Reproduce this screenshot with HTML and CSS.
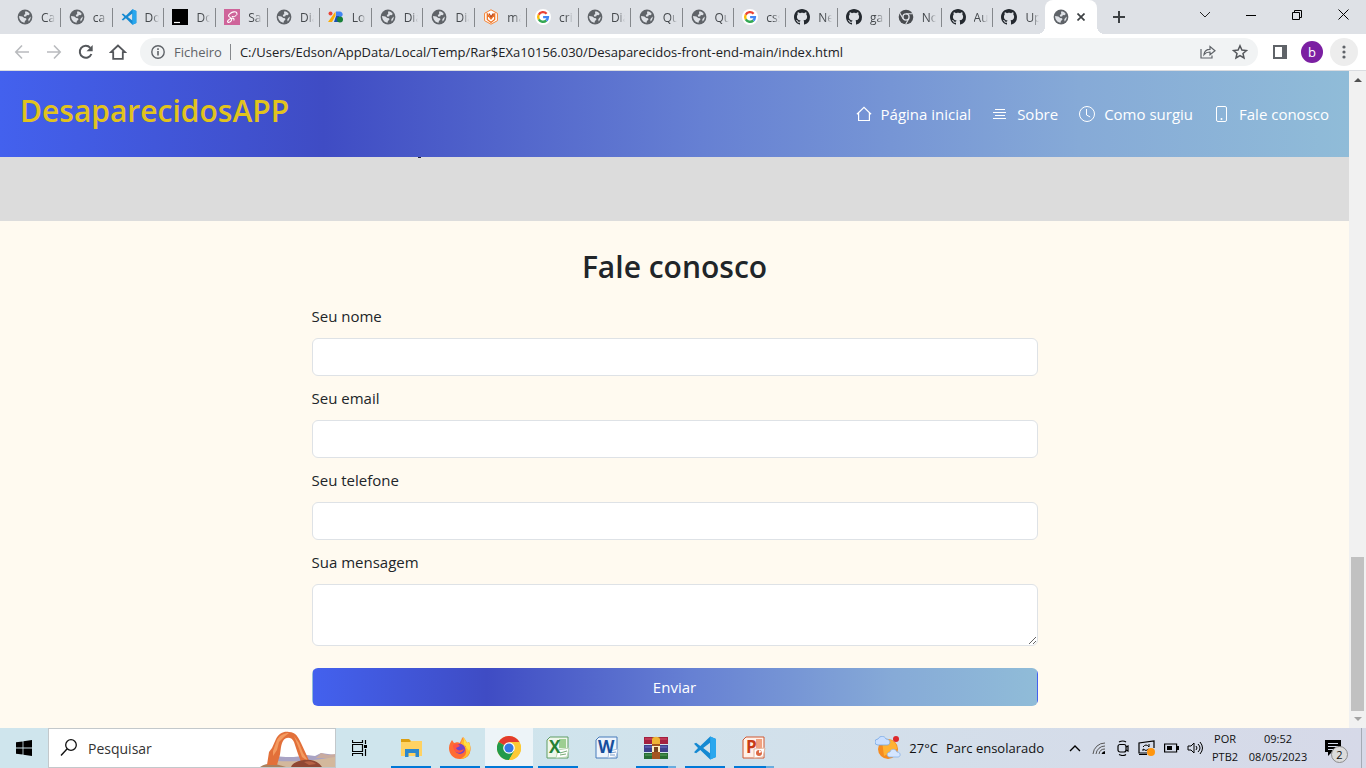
FILE: index.html
```html
<!DOCTYPE html>
<html lang="pt">
<head>
<meta charset="utf-8">
<title>DesaparecidosAPP</title>
<link rel="stylesheet" href="styles.css">
</head>
<body>
<svg class="sprite" aria-hidden="true">
  <symbol id="globe" viewBox="0 0 16 16"><circle cx="8" cy="8" r="7.4" fill="#5f6368"/><path d="M8.400 2.200c1.800.1 3.600 1.200 4.400 2.900l-1.300 1.200-1.600-.2-.8 1.300-2 .1-.3-1.600 1.500-.8-.3-1.300z" fill="#dee1e6"/><path d="M2.100 7.100l3.300.3 1.800 1.700 1.900.2.300 1.500-1.500 1.100-.3 1.900c-3.200-.2-5.600-3.200-5.500-6.700z" fill="#dee1e6"/><path d="M13.700 7.500c.2 2-.7 3.900-2.100 5l-.3-2.200 1-1.200z" fill="#dee1e6"/></symbol>
  <symbol id="vscode" viewBox="0 0 24 24"><path d="M17.200.4 23 3.100v17.800l-5.800 2.700L7.300 14l-4.200 3.300L1 16.200l4-4.200-4-4.200 2.100-1.100L7.300 10zM17 6.800 10.200 12l6.800 5.200z" fill="#1489d2" fill-rule="evenodd"/><path d="M17.200.4 23 3.100v17.800l-5.800 2.700z" fill="#2aa7ee"/></symbol>
  <symbol id="google" viewBox="0 0 16 16"><circle cx="8" cy="8" r="8" fill="#fff"/><g fill="none" stroke-width="2.400"><path d="M3.700 5.700A4.900 4.900 0 0 1 11.600 4.700" stroke="#ea4335"/><path d="M3.800 10.400a5 5 0 0 1-.1-4.700" stroke="#fbbc05"/><path d="M11.300 11.500a4.900 4.900 0 0 1-7.500-1.100" stroke="#34a853"/><path d="M8.100 8.100h4.800a4.800 4.800 0 0 1-1.600 3.400" stroke="#4285f4"/></g></symbol>
  <symbol id="github" viewBox="0 0 16 16"><path fill="#24292f" d="M8 0C3.58 0 0 3.58 0 8c0 3.54 2.29 6.53 5.47 7.59.4.07.55-.17.55-.38 0-.19-.01-.82-.01-1.49-2.01.37-2.53-.49-2.69-.94-.09-.23-.48-.94-.82-1.13-.28-.15-.68-.52-.01-.53.63-.01 1.08.58 1.23.82.72 1.21 1.87.87 2.33.66.07-.52.28-.87.51-1.07-1.78-.2-3.64-.89-3.64-3.95 0-.87.31-1.59.82-2.15-.08-.2-.36-1.02.08-2.12 0 0 .67-.21 2.2.82.64-.18 1.32-.27 2-.27s1.36.09 2 .27c1.53-1.04 2.2-.82 2.2-.82.44 1.1.16 1.92.08 2.12.51.56.82 1.27.82 2.15 0 3.07-1.87 3.75-3.65 3.95.29.25.54.73.54 1.48 0 1.07-.01 1.93-.01 2.2 0 .21.15.46.55.38A8.01 8.01 0 0 0 16 8c0-4.42-3.58-8-8-8"/></symbol>
</svg>

<div class="window">
  <div class="tabstrip">
    <div class="tabs">
      <a class="tab" href="#"><svg class="fav"><use href="#globe"/></svg><span>Ca</span></a>
      <a class="tab" href="#"><svg class="fav"><use href="#globe"/></svg><span>ca</span></a>
      <a class="tab" href="#"><svg class="fav"><use href="#vscode"/></svg><span>Do</span></a>
      <a class="tab" href="#"><svg class="fav" viewBox="0 0 16 16"><path d="M0 0h16v16H0z"/><path d="M2 13.500h6" stroke="#fff" stroke-width="1.200"/></svg><span>Do</span></a>
      <a class="tab" href="#"><svg class="fav" viewBox="0 0 16 16"><path d="M0 0h16v16H0z" fill="#cf649a"/><path d="M12.800 5.600c.7-2.400-1-3.100-3-2.700-2.500.5-5.400 2.300-5.300 3.800.2 1.500 3.400 2 3.200 3.800-.1 1.600-2.600 3.300-3.800 2.700-1.300-.9 1.200-3.500 3.800-4 2.200-.5 2.800.8 2 2.200" fill="none" stroke="#fff" stroke-width="1.100"/><path d="M12.800 5.600c-.7 1.600-3.300 2.600-5 1.800" fill="none" stroke="#fff"/></svg><span>Sa</span></a>
      <a class="tab" href="#"><svg class="fav"><use href="#globe"/></svg><span>Dia</span></a>
      <a class="tab" href="#"><svg class="fav" viewBox="0 0 16 16"><circle cx="2.500" cy="4.500" r="2" fill="#ea4335"/><path d="M7.500 2.500v4L4 13H0z" fill="#fbad05"/><path d="M8 2.500h3.500a3 3 0 0 1 3 4L13 8H8z" fill="#4285f4"/><path d="M8 7h3v6H6z" fill="#1a50b0"/><circle cx="12" cy="10.500" r="3" fill="#188038"/></svg><span>Lo</span></a>
      <a class="tab" href="#"><svg class="fav"><use href="#globe"/></svg><span>Dia</span></a>
      <a class="tab" href="#"><svg class="fav"><use href="#globe"/></svg><span>Dia</span></a>
      <a class="tab" href="#"><svg class="fav" viewBox="0 0 16 16"><path d="M8 .8l6.400 3.500v7.400L8 15.200l-6.400-3.500V4.300z" fill="#fff" stroke="#f58233"/><path d="M4.300 5v5.500l3.700 3 3.700-3V5L8 10z" fill="none" stroke="#ee7425" stroke-width="1.300"/><path d="M6 4.500l2 3.500 2.500-3.500" fill="none" stroke="#bd481c" stroke-width="1.300"/></svg><span>ma</span></a>
      <a class="tab" href="#"><svg class="fav"><use href="#google"/></svg><span>cri</span></a>
      <a class="tab" href="#"><svg class="fav"><use href="#globe"/></svg><span>Dia</span></a>
      <a class="tab" href="#"><svg class="fav"><use href="#globe"/></svg><span>Qu</span></a>
      <a class="tab" href="#"><svg class="fav"><use href="#globe"/></svg><span>Qu</span></a>
      <a class="tab" href="#"><svg class="fav"><use href="#google"/></svg><span>css</span></a>
      <a class="tab" href="#"><svg class="fav"><use href="#github"/></svg><span>Ne</span></a>
      <a class="tab" href="#"><svg class="fav"><use href="#github"/></svg><span>ga</span></a>
      <a class="tab" href="#"><svg class="fav" viewBox="0 0 16 16"><circle cx="8" cy="8" r="7.300" fill="#494c50"/><circle cx="8" cy="8" r="3.100" fill="#494c50" stroke="#dee1e6" stroke-width="1.300"/><path d="M8 4.700h6.800M5.100 9.700 1.800 4M10.800 9.800 7.700 15.200" stroke="#dee1e6" stroke-width="1.100"/></svg><span>No</span></a>
      <a class="tab" href="#"><svg class="fav"><use href="#github"/></svg><span>Au</span></a>
      <a class="tab" href="#"><svg class="fav"><use href="#github"/></svg><span>Up</span></a>
      <div class="tab tab-active"><svg class="fav"><use href="#globe"/></svg><button class="tab-close" aria-label="Fechar"><svg width="8" height="8" viewBox="0 0 8 8"><path d="M.5.5l7 7m0-7l-7 7" stroke="#3c4043" stroke-width="1.700"/></svg></button></div>
    </div>
    <button class="new-tab" aria-label="Novo separador"><svg width="12" height="12"><path d="M6 0v12M0 6h12" stroke="#3c4043" stroke-width="2"/></svg></button>
    <div class="win-controls">
      <button aria-label="Procurar separadores"><svg width="12" height="8"><path d="M1 1l5 5 5-5" fill="none" stroke="#222"/></svg></button>
      <button aria-label="Minimizar"><svg width="10" height="10"><path d="M0 5.500h10" stroke="#000"/></svg></button>
      <button aria-label="Restaurar"><svg width="10" height="10"><path d="M.5 2.500h7v7h-7zM2.500 2.500v-2h7v7h-2" fill="none" stroke="#000"/></svg></button>
      <button aria-label="Fechar"><svg width="11" height="11"><path d="M.5.5l10 10m0-10l-10 10" stroke="#000"/></svg></button>
    </div>
  </div>

  <div class="toolbar">
    <button class="tool" aria-label="Voltar"><svg width="16" height="16" viewBox="0 0 16 16"><path d="M15 8H2m6-6.500L1.800 8 8 14.500" fill="none" stroke="#b9bbbe" stroke-width="1.600"/></svg></button>
    <button class="tool" aria-label="Avançar"><svg width="16" height="16" viewBox="0 0 16 16"><path d="M1 8h13M8 1.500L14.200 8 8 14.500" fill="none" stroke="#b9bbbe" stroke-width="1.600"/></svg></button>
    <button class="tool" aria-label="Recarregar"><svg width="16" height="16" viewBox="0 0 16 16"><path d="M13.400 10A6 6 0 1 1 12.300 3.800" fill="none" stroke="#54575b" stroke-width="2"/><path d="M14.700 1v6.200H8.500z" fill="#54575b"/></svg></button>
    <button class="tool" aria-label="Página principal"><svg width="18" height="16" viewBox="0 0 18 16"><path d="M9 1.500 2 8.200h2.200v6.600h9.600V8.200H16z" fill="none" stroke="#54575b" stroke-width="1.800"/></svg></button>
    <div class="omnibox">
      <svg width="14" height="14" viewBox="0 0 14 14"><circle cx="7" cy="7" r="6.200" fill="none" stroke="#5f6368" stroke-width="1.400"/><path d="M7 6v4.500M7 3.300V5" stroke="#5f6368" stroke-width="1.600"/></svg>
      <span class="scheme">Ficheiro</span>
      <input class="url" type="text" aria-label="Endereço" value="C:/Users/Edson/AppData/Local/Temp/Rar$EXa10156.030/Desaparecidos-front-end-main/index.html">
      <button class="tool" aria-label="Partilhar"><svg width="16" height="16" viewBox="0 0 16 16"><path d="M1 5v9h11v-2.500M4 10.500c.4-3.600 2.500-5.200 6-5.200V2.500l5 4.200-5 4V8C7.500 8 5.500 8.700 4 10.500z" fill="none" stroke="#5f6368" stroke-width="1.200"/></svg></button>
      <button class="tool" aria-label="Favoritos"><svg width="16" height="16" viewBox="0 0 16 16"><path d="M8 1.800l1.900 4.300 4.600.4L11 9.500l1 4.500-4-2.400L4 14l1-4.500-3.500-3 4.600-.4z" fill="none" stroke="#54575b" stroke-width="1.500"/></svg></button>
    </div>
    <button class="tool" aria-label="Painel lateral"><svg width="14" height="14"><path d="M1 1h12v12H1z" fill="none" stroke="#5f6368" stroke-width="2"/><path d="M9 1h4v12H9z" fill="#5f6368"/></svg></button>
    <button class="avatar">b</button>
    <button class="tool tool-menu" aria-label="Menu"><svg width="4" height="14"><g fill="#5f6368"><circle cx="2" cy="2" r="1.600"/><circle cx="2" cy="7" r="1.600"/><circle cx="2" cy="12" r="1.600"/></g></svg></button>
  </div>

  <div class="viewport">
    <div class="page">
      <header class="site-header">
        <h1 class="brand">DesaparecidosAPP</h1>
        <nav class="site-nav">
          <a href="#"><svg class="nav-icon" viewBox="0 0 16 16"><path d="M.9 8.300 8 1.300l7.100 7M2.600 7v7.500h10.800V7" fill="none" stroke="#fff" stroke-width="1.200"/></svg>Página inicial</a>
          <a href="#"><svg class="nav-icon" viewBox="0 0 16 16"><path d="M3 3.500h10M1 6.500h13M3 9.500h10M1 12.500h13" stroke="#fff"/></svg>Sobre</a>
          <a href="#"><svg class="nav-icon" viewBox="0 0 16 16"><circle cx="8" cy="8" r="7.500" fill="none" stroke="#fff"/><path d="M7.500 3v6l3.700 2" fill="none" stroke="#fff"/></svg>Como surgiu</a>
          <a href="#"><svg class="nav-icon" viewBox="0 0 16 16"><rect x="2.500" y=".5" width="10" height="15" rx="1.500" fill="none" stroke="#fff"/><circle cx="7.500" cy="13" r="1" fill="#fff"/></svg>Fale conosco</a>
        </nav>
      </header>
      <section class="band"></section>
      <main class="contact">
        <h2>Fale conosco</h2>
        <form class="contact-form">
          <label for="nome">Seu nome</label>
          <input id="nome" type="text">
          <label for="email">Seu email</label>
          <input id="email" type="email">
          <label for="telefone">Seu telefone</label>
          <input id="telefone" type="tel">
          <label for="mensagem">Sua mensagem</label>
          <textarea id="mensagem" rows="2"></textarea>
          <button type="button">Enviar</button>
        </form>
      </main>
    </div>
    <div class="scrollbar" aria-hidden="true">
      <svg width="17" height="17"><path d="M5 11l4-4 4 4z" fill="#505050"/></svg>
      <div class="thumb"></div>
      <svg width="17" height="17"><path d="M5 6l4 4 4-4z" fill="#a3a3a3"/></svg>
    </div>
  </div>

  <div class="taskbar">
    <button class="task" aria-label="Iniciar"><svg width="16" height="16"><path d="M0 2.300 6.600 1.400v6.100H0zM7.400 1.300 16 0v7.500H7.400zM0 8.500h6.600v6.100L0 13.700zM7.400 8.500H16V16l-8.600-1.300z"/></svg></button>
    <div class="search">
      <svg width="18" height="18" viewBox="0 0 18 18"><circle cx="11" cy="6" r="5.300" fill="none" stroke="#111" stroke-width="1.300"/><path d="M7.200 9.800 1 16.500" stroke="#111" stroke-width="1.400"/></svg>
      <input type="text" aria-label="Pesquisar" placeholder="Pesquisar">
      <svg width="75" height="38" viewBox="0 0 75 38"><path d="M16 27c12 2 22 1 31-1l8 1 6-3 14 2v12H16z" fill="#a9a3c4"/><path d="M58 27l3-3 7 2 7-1v4H56z" fill="#c9ab9f"/><path d="M16 32c20 1 34 0 59-4v10H16z" fill="#d3b89c"/><path d="M0 38c4-3 8-3 12-4l14 4z" fill="#a9815e"/><path d="M7 36l2-13 3-4 4-9c3-6 8-8 13-7 7 0 9 5 12 11l6 13 4 9-8 2-5-13-4-12c-2-5-8-6-11-1-3 5-2 13-4 17l-2 7z" fill="#e2703a"/><path d="M13 22l4-11c3-5 7-7 12-7l-5 4-5 5-2 8-4 6zM34 7l5 7 4 10 6 9-7-5-4-11z" fill="#f49b60"/><path d="M31 38c2-5 8-6 13-7 7-1 14 1 18 7z" fill="#8f4734"/><path d="M44 33c6-2 10 0 12 2l-7 1z" fill="#b76245"/></svg>
    </div>
    <button class="task" aria-label="Vista de tarefas"><svg width="16" height="16"><path d="M.5 4.500h10v7H.5zM.5 0v2.500h10V0M.5 16v-2.500h10V16M13.500 0v4M13.500 9v7" fill="none" stroke="#000" stroke-width="1.200"/><path d="M12 5h3v3h-3z"/></svg></button>
    <div class="apps">
      <button class="task open" aria-label="Explorador"><svg width="24" height="24" viewBox="0 0 24 24"><path d="M2 3h8l2 2v4H2z" fill="#dc9e10"/><path d="M2 6h9l1-1h11v15H2z" fill="#ffd262"/><path d="M6 21v-8h14v8h-3.500v-4h-7v4z" fill="#2d88cc"/></svg></button>
      <button class="task open" aria-label="Firefox"><svg width="24" height="24" viewBox="0 0 24 24"><path d="M1 12c0-4 2-6 3-8l2 3c3-1 4-1 6 0 1-3 2-4 3-6 2 2 3 4 4 6l2-1c3 7 2 17-9 17C5 23 1 18 1 12z" fill="#ff6c32"/><path d="M14 1c0 4 4 6 3 10l5-2c2 8-3 14-10 14 10-4 6-13 1-15z" fill="#ffbd2c"/><path d="M15 1c2 2 3 4 4 6l2-1c2 4 1 8 0 9L16 8z" fill="#ffdf42"/><circle cx="12" cy="13" r="5" fill="#7244ca"/><path d="M5 9c3-2 6-1 7 1l-4 2c1 3 5 3 8 1-2 6-11 5-11-4z" fill="#ff5443"/></svg></button>
      <button class="task open current" aria-label="Chrome"><svg width="24" height="24" viewBox="0 0 24 24"><circle cx="12" cy="12" r="12" fill="#fcc934"/><path d="M12 12 1.600 6A12 12 0 0 1 22.400 6z" fill="#e33b2e"/><path d="M1.600 6A12 12 0 0 0 12 24l5.200-9L12 12z" fill="#229a4b"/><path d="M12 6h10.400A12 12 0 0 1 12 24l5.200-9z" fill="#fcc934"/><circle cx="12" cy="12" r="5.800" fill="#fff"/><circle cx="12" cy="12" r="4.600" fill="#3478e5"/></svg></button>
      <button class="task open" aria-label="Excel"><svg width="24" height="24" viewBox="0 0 24 24"><path d="M4 1h18v21H1V4z" fill="#eef7eb" stroke="#5f9d64"/><path d="M13 3h7v9h-7z" fill="#9dce91"/><path d="M12 14l11-2-2 9-11 1z" fill="#fff" stroke="#b8d6b3"/><path d="M14 17l7-2m-7 4 6-1" stroke="#79ad76"/><text x="3" y="17" class="office-letter" fill="#258135">X</text></svg></button>
      <button class="task" aria-label="Word"><svg width="24" height="24" viewBox="0 0 24 24"><path d="M4 1h18v21H1V4z" fill="#edf4fc" stroke="#477bba"/><path d="M14 15l9-2-2 8-8 1z" fill="#fff" stroke="#a7bfdf"/><path d="M15 17l6-1m-6 3h5" stroke="#789ccc"/><text x="3" y="17" class="office-letter" fill="#174f9d">W</text></svg></button>
      <button class="task open grouped" aria-label="WinRAR"><svg width="24" height="24" viewBox="0 0 24 24"><path d="M0 1h24v7H0z" fill="#a3203f"/><path d="M0 9h24v7H0z" fill="#3e3f8d"/><path d="M0 17h24v6H0z" fill="#276d35"/><path d="M1 3h22" stroke="#da506d"/><path d="M1 11h22" stroke="#7274c8"/><path d="M1 19h22" stroke="#58a65d"/><path d="M8 1h8v22H8z" fill="#a45420"/><path d="M8 3c2-3 6-3 8 0v5H8z" fill="#efb436"/><path d="M8 10h8v6H8z" fill="#fff0c2"/><path d="M10 11h4v5h-4z" fill="#764420"/></svg></button>
      <button class="task open" aria-label="Visual Studio Code"><svg width="24" height="24"><use href="#vscode"/></svg></button>
      <button class="task open grouped" aria-label="PowerPoint"><svg width="24" height="24" viewBox="0 0 24 24"><path d="M4 1h18v21H1V4z" fill="#fff1e9" stroke="#cf5932"/><path d="M14 3h6v9h-6z" fill="#f0a17f"/><path d="M12 13l11-1-2 9-9 1z" fill="#fff" stroke="#e3b49d"/><circle cx="17" cy="17" r="3" fill="#dc6942"/><path d="M17 17v-3l3 2z" fill="#fff"/><text x="4" y="17" class="office-letter" fill="#c73b16">P</text></svg></button>
    </div>
    <button class="weather"><svg width="26" height="24" viewBox="0 0 26 24"><circle cx="13" cy="13" r="10" fill="#f58b20"/><path d="M7 5c8-4 15 1 15 8L9 20z" fill="#ffb234"/><path d="M3 9a3 3 0 0 1 0-6c2-4 7-3 8 0 5 0 5 6 1 6z" fill="#cadfff" stroke="#77a8e5" stroke-width=".8"/><path d="M14 21c-3-1-2-5 1-5 1-4 6-3 7 0 4 0 4 5 1 5z" fill="#d5e6ff" stroke="#8ab2e8" stroke-width=".8"/><circle cx="21" cy="3" r="3" fill="#dc292b"/></svg><span>27°C</span><span>Parc ensolarado</span></button>
    <div class="tray">
      <button aria-label="Mostrar ícones"><svg width="12" height="8"><path d="M1 7l5-5 5 5" fill="none" stroke="#000" stroke-width="1.400"/></svg></button>
      <button aria-label="Rede"><svg width="14" height="14"><g fill="none" stroke="#555"><path d="M1 13A12 12 0 0 1 13 2M4 13a9 9 0 0 1 9-8M7 13a6 6 0 0 1 6-5"/></g><path d="M9.500 13a4 4 0 0 1 3.500-3v3z"/></svg></button>
      <button aria-label="Câmara"><svg width="14" height="16"><path d="M3 2q4-2 7 0M3 14.500q4 2 7 0M10 7l2-1v5l-2-1" fill="none" stroke="#000" stroke-width="1.200"/><rect x="2" y="4.500" width="8" height="7.500" rx="2" fill="none" stroke="#000" stroke-width="1.200"/></svg></button>
      <button aria-label="Atualização"><svg width="18" height="16"><path d="M9 13H1V3l15-2v7M1 14.500h8" fill="none" stroke="#000" stroke-width="1.200"/><path d="M5 7q3-4 6 0V4M11 9q-3 3-6 0v2" fill="none" stroke="#000"/><circle cx="13" cy="12" r="4" fill="#ff960f"/></svg></button>
      <button aria-label="Bateria"><svg width="15" height="10"><path d="M.6 1h12v8H.6z" fill="none" stroke="#000" stroke-width="1.200"/><path d="M3 3h5v4H3zM13 3h2v4h-2z"/></svg></button>
      <button aria-label="Volume"><svg width="17" height="14"><path d="M1 5h3l3-3v10L4 9H1zM9 5q2 2 0 4M11 3q4 4 0 8M13 1q5 6 0 12" fill="none" stroke="#000"/></svg></button>
    </div>
    <div class="status lang"><span>POR</span><span>PTB2</span></div>
    <div class="status clock"><span>09:52</span><span>08/05/2023</span></div>
    <button class="notices" aria-label="Notificações"><svg width="18" height="18"><path d="M1 1h16v12H8l-4 4v-4H1z"/><path d="M4 4.500h10M4 7.500h10M4 10.500h6" stroke="#d5dbe9"/></svg><span class="badge">2</span></button>
    <button class="desktop" aria-label="Ambiente de trabalho"></button>
  </div>
</div>
</body>
</html>
```
FILE: styles.css
```css
* { box-sizing: border-box; }
body { margin: 0; font-family: "Open Sans", sans-serif; color: #212529; }
button { border: 0; padding: 0; background: none; font: inherit; color: inherit; }
input, textarea { font: inherit; color: inherit; }
a { color: inherit; text-decoration: none; }
svg { flex: none; display: block; }
.sprite { display: none; }

.window { min-height: 100vh; display: grid; grid-template-rows: 34px 37px 1fr 40px; }

/* Browser tabs */
.tabstrip { display: flex; background: #dee1e6; padding-left: 9px; }
.tabs { flex: 1; display: grid; grid-template-columns: repeat(21, minmax(0, 1fr)); }
.tab { display: flex; align-items: center; gap: 8px; padding-left: 8px; position: relative; font-size: 12px; color: #45494d; }
.tab::after { content: ""; position: absolute; right: 0; top: 8px; bottom: 7px; width: 1px; background: #85888c; }
.tab span { width: 14px; overflow: hidden; white-space: nowrap; -webkit-mask-image: linear-gradient(90deg, #000 50%, transparent); mask-image: linear-gradient(90deg, #000 50%, transparent); }
.tab:nth-child(20)::after, .tab-active::after { display: none; }
.tab-active { background: #fff; border-radius: 8px 8px 0 0; gap: 0; }
.tab-active::before { content: ""; position: absolute; z-index: 1; left: -8px; right: -8px; bottom: 0; height: 8px; background: radial-gradient(circle at 0 0, transparent 8px, #fff 8px) left / 8px 8px no-repeat, radial-gradient(circle at 100% 0, transparent 8px, #fff 8px) right / 8px 8px no-repeat; }
.fav { width: 16px; height: 16px; }
.tab-close { width: 24px; height: 24px; display: grid; place-items: center; }
.new-tab { width: 44px; display: grid; place-items: center; }
.win-controls { display: grid; grid-template-columns: repeat(4, 46px); margin-left: 41px; height: 29px; }
.win-controls button { display: grid; place-items: center; }

/* Address bar */
.toolbar { display: flex; align-items: center; background: #fff; border-bottom: 1px solid #dadce0; padding: 0 8px 0 6px; }
.tool { width: 32px; height: 28px; display: grid; place-items: center; flex: none; }
.omnibox { flex: 1; height: 28px; margin: 0 6px; padding: 0 2px 0 11px; background: #f1f3f4; border-radius: 14px; display: flex; align-items: center; font-size: 13px; }
.scheme { color: #5f6368; margin-left: 9px; padding-right: 8px; line-height: 16px; border-right: 1px solid #85888c; }
.url { flex: 1; min-width: 0; border: 0; padding: 0 0 0 9px; background: none; color: #202124; outline: 0; }
.avatar { width: 22px; height: 22px; margin: 0 5px; border-radius: 50%; background: #7b1fa2; color: #fff; font-size: 13px; line-height: 20px; }
.tool-menu { width: 28px; margin: 0 0 0 2px; border-radius: 50%; background: #ededed; }

/* Site */
.viewport { display: grid; grid-template-columns: 1fr 17px; }
.page { display: flex; flex-direction: column; background: #fffaf0; font-size: 15px; }
.site-header, .contact-form button { background-image: linear-gradient(90deg, #4361ee, #3f4cc4 24%, #6680d3 52%, #86aad7 80%, #90bcd8); }
.site-header { display: flex; justify-content: space-between; align-items: center; height: 86px; padding: 0 20px; color: #fff; }
.brand { margin: 0 0 7px; color: #e1c31d; font-size: 30px; font-weight: 600; line-height: 40px; }
.site-nav { display: flex; gap: 21px; }
.site-nav a { display: flex; align-items: center; gap: 9px; line-height: 24px; }
.nav-icon { width: 16px; height: 16px; }
.band { height: 64px; background: #dcdcdc; }
.band::before { content: ""; display: block; width: 3px; height: 1px; margin-left: 31%; background: #22243a; }
.contact { flex: 1; padding: 28px 16px 22px; }
.contact h2 { margin: 0 0 19px; text-align: center; font-size: 30px; font-weight: 600; line-height: 36px; }
.contact-form { display: flex; flex-direction: column; gap: 10px; max-width: 726px; margin: 0 auto; }
.contact-form label { line-height: 24px; }
.contact-form input, .contact-form textarea { width: 100%; height: 38px; padding: 6px 12px; background: #fff; border: 1px solid #dee2e6; border-radius: 6px; }
.contact-form textarea { height: 62px; resize: vertical; }
.contact-form button { height: 38px; margin-top: 12px; border: 1px solid transparent; border-radius: 6px; color: #fff; }
.scrollbar { display: flex; flex-direction: column; background: #f1f1f1; }
.thumb { width: 13px; height: 154px; margin: auto 2px 0; background: #c1c1c1; }

/* Taskbar */
.taskbar { display: flex; background: linear-gradient(90deg, #cfe5ed, #cfe5ed 35%, #d5dce9 80%, #d6d9e8); color: #111; font-size: 14px; }
.task { width: 48px; display: grid; place-items: center; position: relative; flex: none; }
.search { width: 288px; display: flex; align-items: center; padding-left: 11px; background: #fff; border: 1px solid #c3c8cb; }
.search input { flex: 1; min-width: 0; border: 0; padding: 0 0 0 10px; outline: 0; background: none; }
.search input::placeholder { color: #333; opacity: 1; }
.apps { display: flex; gap: 1px; margin: 0 auto 0 3px; }
.open::after { content: ""; position: absolute; left: 4px; right: 4px; bottom: 0; height: 2px; background: #0078d7; }
.current { background: #edf4f8; }
.current::after { left: 0; right: 0; }
.grouped::after { background: linear-gradient(90deg, #0078d7 80%, #68acdf 80%); }
.office-letter { font: bold 17px "Open Sans", sans-serif; }
.weather { display: flex; align-items: center; gap: 8px; font-size: 13px; margin-right: 19px; white-space: nowrap; }
.tray { display: grid; grid-template-columns: repeat(6, 24px); }
.tray button { display: grid; place-items: center; }
.status { display: flex; flex-direction: column; justify-content: center; align-items: center; font-size: 11px; line-height: 18px; }
.lang { width: 36px; }
.clock { width: 70px; }
.notices { width: 48px; display: flex; align-items: center; padding-left: 11px; position: relative; }
.badge { position: absolute; left: 18px; top: 18px; width: 17px; height: 17px; border: 1px solid #8c8c8c; border-radius: 50%; background: #dcdcdc; font-size: 11px; line-height: 15px; text-align: center; }
.desktop { width: 5px; border-left: 1px solid #a5abb5; }
```
